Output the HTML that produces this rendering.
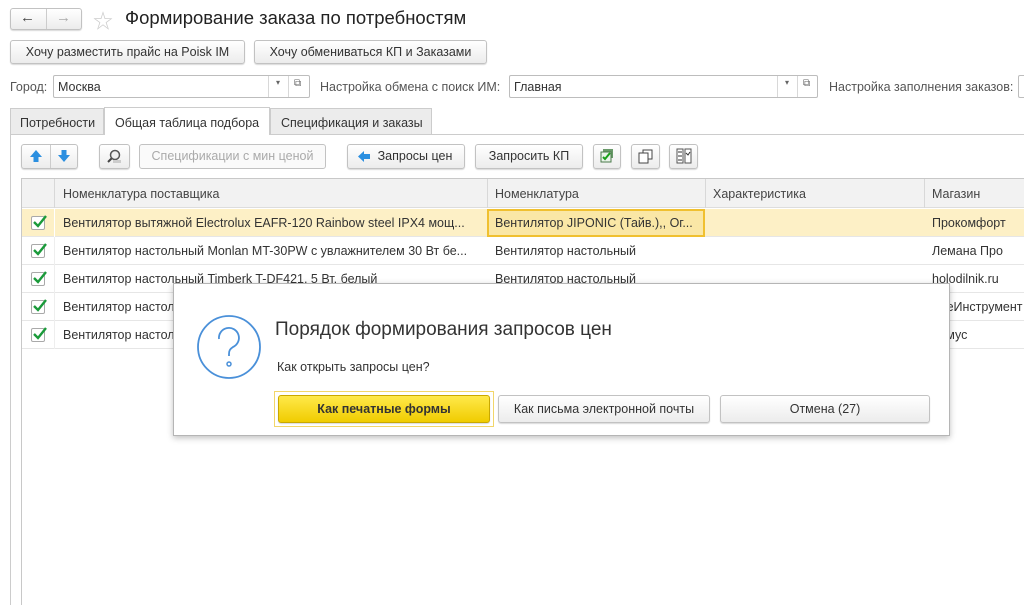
<!DOCTYPE html>
<html><head><meta charset="utf-8"><style>
*{box-sizing:border-box;margin:0;padding:0}
body{width:1024px;height:605px;overflow:hidden;background:#fff;font-family:"Liberation Sans","Noto Sans CJK SC",sans-serif;font-size:12.5px;color:#333;position:relative}
.a{position:absolute;white-space:nowrap}
.btn{position:absolute;border:1px solid #c2c2c2;border-radius:3px;background:linear-gradient(#fff,#ececec);box-shadow:0 1px 1px rgba(0,0,0,.15);text-align:center;color:#333;font-size:12.5px}
.inp{position:absolute;border:1px solid #bdbdbd;border-radius:2px;background:#fff;height:23px}
.vl{position:absolute;width:1px;background:#d8d8d8}
.hl{position:absolute;height:1px;background:#e3e3e3}
.cb{position:absolute;width:14px;height:14px;border:1px solid #a9a9a9;background:#fff;border-radius:2px}
.cb svg{position:absolute;left:0;top:-3px}
.row{position:absolute;left:22px;width:1002px;height:28px;border-bottom:1px solid #e6e6e6}
.row span{position:absolute;top:7px}
</style></head><body>
<div class="btn" style="left:10px;top:8px;width:72px;height:22px"></div>
<div class="vl" style="left:46px;top:9px;height:20px;background:#ccc"></div>
<div class="a" style="left:20px;top:9px;font-size:15px;color:#444">&#8592;</div>
<div class="a" style="left:56px;top:9px;font-size:15px;color:#aaa">&#8594;</div>
<div class="a" style="left:93px;top:5px;font-size:20px;color:#ccc">&#9734;</div>
<div class="a" style="left:125px;top:7px;font-size:18.5px;color:#222">Формирование заказа по потребностям</div>
<div class="btn" style="left:10px;top:40px;width:235px;height:24px;line-height:22px">Хочу разместить прайс на Poisk IM</div>
<div class="btn" style="left:254px;top:40px;width:233px;height:24px;line-height:22px">Хочу обмениваться КП и Заказами</div>
<div class="a" style="left:10px;top:80px;color:#555">Город:</div>
<div class="inp" style="left:53px;top:75px;width:257px"><span class="a" style="left:4px;top:4px">Москва</span><div class="vl" style="left:214px;top:0;height:21px"></div><div class="vl" style="left:234px;top:0;height:21px"></div><span class="a" style="left:222px;top:2px;font-size:8px;color:#666">&#9662;</span><span class="a" style="left:240px;top:2px;font-size:10px;color:#666">&#10697;</span></div>
<div class="a" style="left:320px;top:80px;color:#555">Настройка обмена с поиск ИМ:</div>
<div class="inp" style="left:509px;top:75px;width:309px"><span class="a" style="left:4px;top:4px">Главная</span><div class="vl" style="left:267px;top:0;height:21px"></div><div class="vl" style="left:287px;top:0;height:21px"></div><span class="a" style="left:275px;top:2px;font-size:8px;color:#666">&#9662;</span><span class="a" style="left:293px;top:2px;font-size:10px;color:#666">&#10697;</span></div>
<div class="a" style="left:829px;top:80px;color:#555">Настройка заполнения заказов:</div>
<div class="inp" style="left:1018px;top:75px;width:20px"></div>
<div class="a" style="left:10px;top:108px;width:94px;height:27px;background:#ececec;border:1px solid #ccc;padding:7px 0 0 9px">Потребности</div>
<div class="a" style="left:104px;top:107px;width:166px;height:28px;background:#fff;border:1px solid #ccc;border-bottom:none;padding:8px 0 0 10px;z-index:2">Общая таблица подбора</div>
<div class="a" style="left:270px;top:108px;width:162px;height:27px;background:#ececec;border:1px solid #ccc;padding:7px 0 0 10px">Спецификация и заказы</div>
<div class="hl" style="left:10px;top:134px;width:1014px;background:#ccc"></div>
<div class="vl" style="left:10px;top:134px;height:471px;background:#ccc"></div>
<div class="btn" style="left:21px;top:144px;width:57px;height:25px"></div>
<div class="vl" style="left:50px;top:145px;height:23px;background:#ccc"></div>
<svg class="a" style="left:29px;top:149px" width="14" height="14"><path d="M7 1L13 8H9.5V13H4.5V8H1Z" fill="#2b8fe0"/></svg>
<svg class="a" style="left:57px;top:149px" width="14" height="14"><path d="M7 13L13 6H9.5V1H4.5V6H1Z" fill="#2b8fe0"/></svg>
<div class="btn" style="left:99px;top:144px;width:31px;height:25px"></div>
<svg class="a" style="left:106px;top:149px" width="17" height="16"><circle cx="9" cy="6" r="4.5" fill="#eee" stroke="#555" stroke-width="1.5"/><path d="M5.5 9.5L2 13" stroke="#444" stroke-width="2"/><rect x="7" y="11" width="8" height="3" fill="#ccc"/></svg>
<div class="btn" style="left:139px;top:144px;width:187px;height:25px;line-height:23px;color:#aaa;box-shadow:none;background:#fafafa">Спецификации с мин ценой</div>
<div class="btn" style="left:347px;top:144px;width:118px;height:25px;line-height:23px;padding-left:18px">Запросы цен</div>
<svg class="a" style="left:357px;top:150px" width="14" height="13"><path d="M1 6.5L7 1V4H13V9H7V12Z" fill="#2b8fe0"/></svg>
<div class="btn" style="left:475px;top:144px;width:108px;height:25px;line-height:23px">Запросить КП</div>
<div class="btn" style="left:593px;top:144px;width:28px;height:25px"></div>
<svg class="a" style="left:599px;top:148px" width="16" height="16"><rect x="4" y="1" width="10" height="9" fill="#6a9a6a"/><rect x="2" y="4" width="10" height="10" fill="#eaf3ea" stroke="#4a7a4a"/><path d="M4 9l2 2 5-6" stroke="#1aa01a" stroke-width="2" fill="none"/></svg>
<div class="btn" style="left:631px;top:144px;width:29px;height:25px"></div>
<svg class="a" style="left:638px;top:149px" width="15" height="15"><rect x="5" y="1" width="9" height="9" fill="#fff" stroke="#444"/><rect x="1" y="4" width="9" height="10" fill="#fff" stroke="#444"/></svg>
<div class="btn" style="left:669px;top:144px;width:29px;height:25px"></div>
<svg class="a" style="left:676px;top:148px" width="16" height="16"><rect x="1" y="1" width="6" height="14" fill="#fff" stroke="#555"/><rect x="9" y="1" width="6" height="14" fill="#fff" stroke="#555"/><path d="M2 4h4M2 8h4M2 12h4M10 5l2 2 2-3" stroke="#333" fill="none"/></svg>
<div class="vl" style="left:21px;top:178px;height:427px;background:#c8c8c8"></div>
<div class="hl" style="left:21px;top:178px;width:1003px;background:#c8c8c8"></div>
<div class="a" style="left:22px;top:179px;width:1002px;height:29px;background:#f2f2f2;border-bottom:1px solid #ddd"></div>
<div class="vl" style="left:54px;top:179px;height:29px"></div>
<div class="vl" style="left:487px;top:179px;height:29px"></div>
<div class="vl" style="left:705px;top:179px;height:29px"></div>
<div class="vl" style="left:924px;top:179px;height:29px"></div>
<div class="a" style="left:63px;top:187px;color:#444">Номенклатура поставщика</div>
<div class="a" style="left:495px;top:187px;color:#444">Номенклатура</div>
<div class="a" style="left:713px;top:187px;color:#444">Характеристика</div>
<div class="a" style="left:932px;top:187px;color:#444">Магазин</div>
<div class="row" style="top:209px;background:#fdf0c6"><div class="vl" style="left:32px;top:0;height:28px;background:#fff"></div><div class="a" style="left:465px;top:0;width:218px;height:28px;border:2px solid #f0c030;background:#fae7a6"></div><span style="left:41px">Вентилятор вытяжной Electrolux EAFR-120 Rainbow steel IPX4 мощ...</span><span style="left:473px">Вентилятор JIPONIC (Тайв.),, Ог...</span><span style="left:910px">Прокомфорт</span></div>
<div class="row" style="top:237px"><span style="left:41px">Вентилятор настольный Monlan MT-30PW с увлажнителем 30 Вт бе...</span><span style="left:473px">Вентилятор настольный</span><span style="left:910px">Лемана Про</span></div>
<div class="row" style="top:265px"><span style="left:41px">Вентилятор настольный Timberk T-DF421, 5 Вт, белый</span><span style="left:473px">Вентилятор настольный</span><span style="left:910px">holodilnik.ru</span></div>
<div class="row" style="top:293px"><span style="left:41px">Вентилятор настол</span><span style="left:910px">ВсеИнструмент</span></div>
<div class="row" style="top:321px"><span style="left:41px">Вентилятор настол</span><span style="left:910px">Комус</span></div>
<div class="vl" style="left:54px;top:237px;height:112px;background:#eee"></div>
<div class="cb" style="left:31px;top:216px"><svg width="16" height="16"><path d="M2 8l4 4 8-10" stroke="#1a9a3a" stroke-width="2.4" fill="none"/></svg></div>
<div class="cb" style="left:31px;top:244px"><svg width="16" height="16"><path d="M2 8l4 4 8-10" stroke="#1a9a3a" stroke-width="2.4" fill="none"/></svg></div>
<div class="cb" style="left:31px;top:272px"><svg width="16" height="16"><path d="M2 8l4 4 8-10" stroke="#1a9a3a" stroke-width="2.4" fill="none"/></svg></div>
<div class="cb" style="left:31px;top:300px"><svg width="16" height="16"><path d="M2 8l4 4 8-10" stroke="#1a9a3a" stroke-width="2.4" fill="none"/></svg></div>
<div class="cb" style="left:31px;top:328px"><svg width="16" height="16"><path d="M2 8l4 4 8-10" stroke="#1a9a3a" stroke-width="2.4" fill="none"/></svg></div>
<div class="a" style="left:173px;top:283px;width:777px;height:153px;background:#fff;border:1px solid #b5b5b5;box-shadow:0 2px 6px rgba(0,0,0,.25)"></div>
<svg class="a" style="left:196px;top:314px" width="66" height="66"><circle cx="33" cy="33" r="31" fill="none" stroke="#4a90d9" stroke-width="1.8"/><path d="M23 25a10 10 0 1 1 14 8c-3 2-4 3.5-4 7v2" fill="none" stroke="#4a90d9" stroke-width="1.8"/><circle cx="33" cy="50" r="2" fill="none" stroke="#4a90d9" stroke-width="1.5"/></svg>
<div class="a" style="left:275px;top:319px;font-size:19px;color:#333">Порядок формирования запросов цен</div>
<div class="a" style="left:277px;top:360px;font-size:12.5px;color:#333">Как открыть запросы цен?</div>
<div class="a" style="left:274px;top:391px;width:220px;height:36px;border:1px solid #f2d66a"></div>
<div class="btn" style="left:278px;top:395px;width:212px;height:28px;line-height:26px;background:linear-gradient(#ffe94a,#f0cc00);border-color:#c9a800;font-weight:bold;color:#333">Как печатные формы</div>
<div class="btn" style="left:498px;top:395px;width:212px;height:28px;line-height:26px">Как письма электронной почты</div>
<div class="btn" style="left:720px;top:395px;width:210px;height:28px;line-height:26px">Отмена (27)</div>
</body></html>
